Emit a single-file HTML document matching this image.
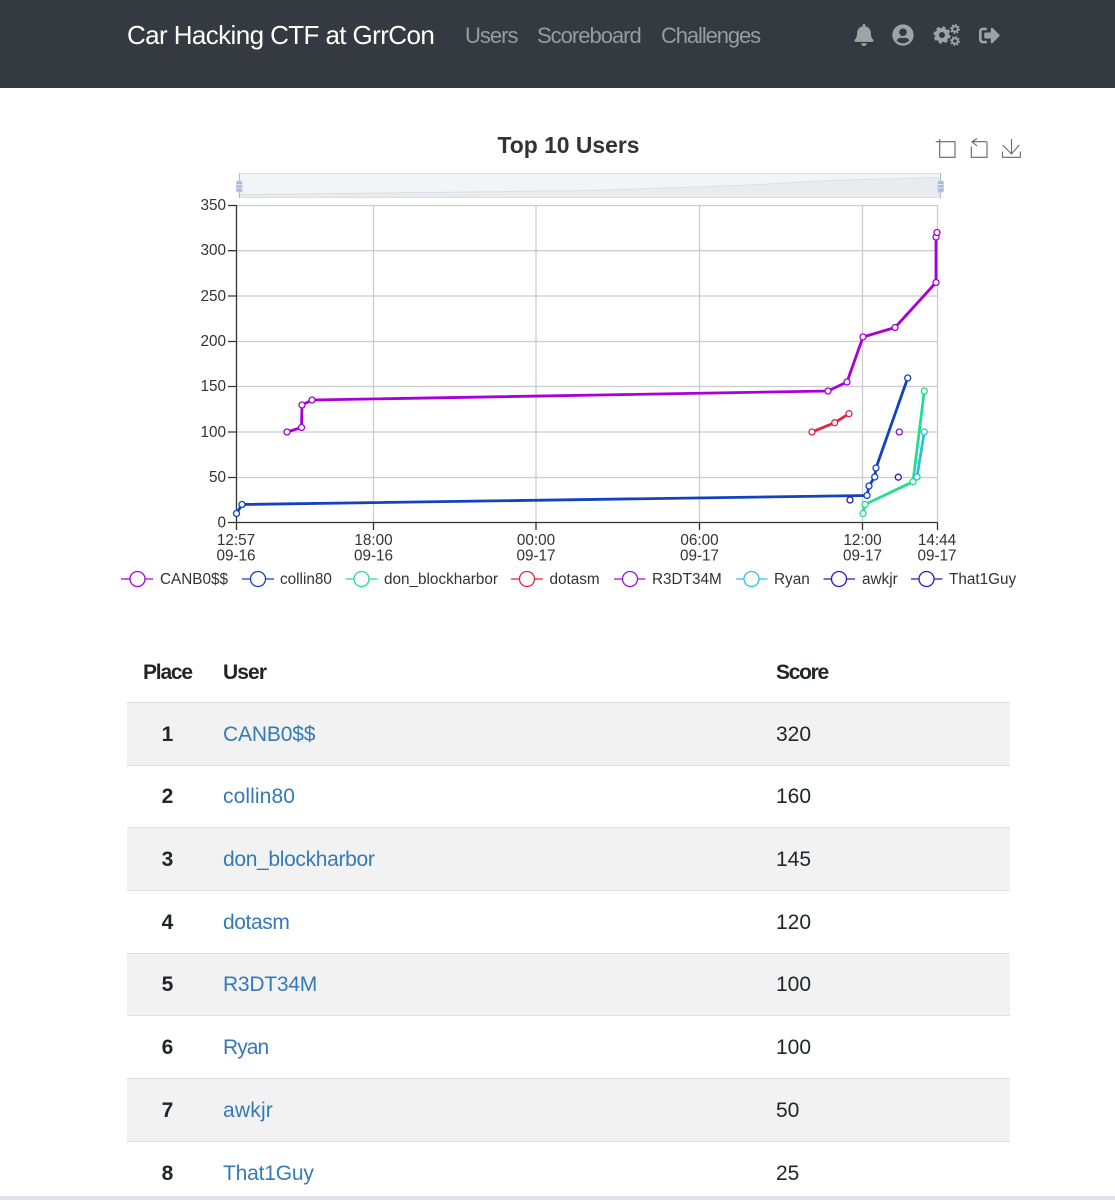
<!DOCTYPE html>
<html lang="en">
<head>
<meta charset="utf-8">
<title>Car Hacking CTF at GrrCon</title>
<style>
*{box-sizing:border-box}
html,body{margin:0;padding:0;width:1115px;height:1200px;overflow:hidden;background:#fff}
body{position:relative;font-family:"Liberation Sans",sans-serif;color:#212529}
a{text-decoration:none}
nav{position:absolute;left:0;top:0;width:1115px;height:88px;background:#343a40}
nav a{position:absolute;white-space:nowrap;line-height:30px;top:21px;font-size:22px;color:#989b9f}
nav a.brand{left:127px;top:20px;font-size:26px;color:#fff;letter-spacing:-.6px}
nav svg{position:absolute;left:0;top:0}
#chart{position:absolute;left:0;top:88px}
table{position:absolute;left:127px;top:640px;width:883px;border-collapse:separate;border-spacing:0;table-layout:fixed;font-size:21px}
th,td{padding:0;text-align:left;vertical-align:middle;border-top:1px solid #dfe0e6}
th{border-top:0;height:62px;font-weight:bold;padding-top:3px}
td{padding-top:1px}
th.p{padding-left:16px;letter-spacing:-1.2px}
td.p{font-weight:bold;text-align:center}
tbody tr:nth-child(odd) td{background:#f2f2f3}
td a{color:#337ab7}
#band{position:absolute;left:0;top:1196px;width:1115px;height:4px;background:#e2e3ea}
</style>
</head>
<body>
<nav>
<a class="brand">Car Hacking CTF at GrrCon</a>
<a style="left:465px;letter-spacing:-1px">Users</a>
<a style="left:537px;letter-spacing:-1px">Scoreboard</a>
<a style="left:661px;letter-spacing:-1.1px">Challenges</a>
<svg width="1115" height="88" fill="#a0a3a6">
<svg x="854" y="24" width="20" height="22" viewBox="0 0 448 512"><path d="M224 512c35.32 0 63.97-28.65 63.97-64H160.03c0 35.35 28.65 64 63.97 64zm215.39-149.71c-19.32-20.76-55.47-51.99-55.47-154.29 0-77.7-54.48-139.9-127.94-155.16V32c0-17.67-14.32-32-31.98-32s-31.98 14.33-31.98 32v20.84C118.56 68.1 64.08 130.3 64.08 208c0 102.3-36.15 133.53-55.47 154.29-6 6.45-8.66 14.16-8.61 21.71.11 16.4 12.98 32 32.1 32h383.8c19.12 0 32-15.6 32.1-32 .05-7.55-2.61-15.27-8.61-21.71z"/></svg>
<svg x="892" y="24" width="22" height="22" viewBox="0 0 496 512"><path d="M248 8C111 8 0 119 0 256s111 248 248 248 248-111 248-248S385 8 248 8zm0 96c48.6 0 88 39.4 88 88s-39.4 88-88 88-88-39.4-88-88 39.4-88 88-88zm0 344c-58.7 0-111.3-26.6-146.5-68.2 18.8-35.4 55.6-59.8 98.5-59.8 2.4 0 4.8.4 7.1 1.1 13 4.2 26.6 6.9 40.9 6.9 14.3 0 28-2.7 40.9-6.9 2.3-.7 4.7-1.1 7.1-1.1 42.9 0 79.7 24.4 98.5 59.8C359.3 421.4 306.7 448 248 448z"/></svg>
<g fill="none" stroke="#a0a3a6">
<circle cx="942" cy="35" r="5" stroke-width="4"/>
<circle cx="942" cy="35" r="7.3" stroke-width="2.6" stroke-dasharray="3.2 2.53"/>
<circle cx="955" cy="29" r="2.8" stroke-width="2"/>
<circle cx="955" cy="29" r="4.2" stroke-width="1.6" stroke-dasharray="1.6 1.7"/>
<circle cx="955" cy="41" r="2.8" stroke-width="2"/>
<circle cx="955" cy="41" r="4.2" stroke-width="1.6" stroke-dasharray="1.6 1.7"/>
</g>
<svg x="979" y="25" width="21" height="21" viewBox="0 0 512 512"><path d="M497 273L329 441c-15 15-41 4.5-41-17v-96H152c-13.3 0-24-10.7-24-24v-96c0-13.3 10.7-24 24-24h136V88c0-21.4 25.9-32 41-17l168 168c9.3 9.4 9.3 24.6 0 34zM192 436v-40c0-6.6-5.4-12-12-12H96c-17.7 0-32-14.3-32-32V160c0-17.7 14.3-32 32-32h84c6.6 0 12-5.4 12-12V76c0-6.6-5.4-12-12-12H96c-53 0-96 43-96 96v192c0 53 43 96 96 96h84c6.6 0 12-5.4 12-12z"/></svg>
</svg>
</nav>

<svg id="chart" width="1115" height="530" viewBox="0 88 1115 530" font-family="'Liberation Sans',sans-serif">
<text x="568.500" y="153" font-size="22.900" font-weight="bold" fill="#333" text-anchor="middle">Top 10 Users</text>

<!-- toolbox -->
<g fill="none" stroke="#666" stroke-width="1.100">
<path d="M935.700 141.700H955V157.300H939.700V139"/>
<path d="M986.700 141.700H972.500M977 138.500L972 141.700L977 146M971.300 146.500V157.300H987V141.700"/>
<path d="M1011.500 139V154M1002.700 145L1011.500 154L1019.300 145M1002.500 151.500V157.300H1020.300V151.500"/>
</g>

<!-- data zoom -->
<rect x="239.500" y="173.500" width="701" height="24" fill="#f3f4f8" stroke="#dcdde2"/>
<path d="M240 194.500L400 192.800L590 190.500L740 185.500L830 180.500L940 177.500V197H240Z" fill="#e9ebf0"/>
<path d="M240 194.500L400 192.800L590 190.500L740 185.500L830 180.500L940 177.500" fill="none" stroke="#dcdfe5"/>
<path d="M239.500 173V198M940.500 173V198" stroke="#a9b7d0" stroke-width="1"/>
<g fill="#a9b9d8" stroke="#c6d0e4">
<rect x="236.500" y="181" width="5.500" height="11" rx="1"/>
<rect x="938" y="181" width="5.500" height="11" rx="1"/>
</g>
<path d="M237 184.500H241.500M237 188H241.500M938.500 184.500H943M938.500 188H943" stroke="#e8ecf4"/>

<!-- grid -->
<g stroke="#ccc" stroke-width="1.300" fill="none">
<path d="M236.500 205.500H937.500M236.500 250.700H937.500M236.500 296H937.500M236.500 341.500H937.500M236.500 386.500H937.500M236.500 432H937.500M236.500 477.500H937.500"/>
<path d="M373.500 205V522M536 205V522M699.500 205V522M862.500 205V522M937.500 205V522"/>
</g>
<!-- axes -->
<g stroke="#333" stroke-width="1.300" fill="none">
<path d="M236.500 205V530M228 522.500H937.500"/>
<path d="M228 205.500H236.500M228 250.700H236.500M228 296H236.500M228 341.500H236.500M228 386.500H236.500M228 432H236.500M228 477.500H236.500"/>
<path d="M373.500 522.500V530M536 522.500V530M699.500 522.500V530M862.500 522.500V530M937.500 522.500V530"/>
</g>
<g font-size="15.300" fill="#333" text-anchor="end">
<text x="226" y="210">350</text>
<text x="226" y="255">300</text>
<text x="226" y="301">250</text>
<text x="226" y="346">200</text>
<text x="226" y="391">150</text>
<text x="226" y="437">100</text>
<text x="226" y="482">50</text>
<text x="226" y="527.500">0</text>
</g>
<g font-size="15.300" fill="#333" text-anchor="middle">
<text x="236" y="545">12:57</text><text x="236" y="560.500">09-16</text>
<text x="373.500" y="545">18:00</text><text x="373.500" y="560.500">09-16</text>
<text x="536" y="545">00:00</text><text x="536" y="560.500">09-17</text>
<text x="699.500" y="545">06:00</text><text x="699.500" y="560.500">09-17</text>
<text x="862.500" y="545">12:00</text><text x="862.500" y="560.500">09-17</text>
<text x="937" y="545">14:44</text><text x="937" y="560.500">09-17</text>
</g>

<!-- series -->
<g fill="none" stroke-width="2.800" stroke-linejoin="round">
<polyline stroke="#a800d8" points="287,432 301.500,427.500 302,405 312,400 828,391 847,382 863,337 895,327.500 936,282.500 936,237 937,232.500"/>
<polyline stroke="#1242c0" points="236.500,513.500 242,504.500 867,495.500 869,486 874.700,477 876,468 907.700,378"/>
<polyline stroke="#20e08c" points="863,513.500 865,504.500 913,481.700 924.300,391"/>
<polyline stroke="#e8223c" points="812,432 834.700,422.700 849,413.700"/>
<polyline stroke="#30bde0" points="917,477 924.300,432"/>
</g>
<g fill="#fff" stroke-width="1.300">
<g stroke="#a800d8">
<circle cx="287" cy="432" r="3"/><circle cx="301.500" cy="427.500" r="3"/><circle cx="302" cy="405" r="3"/><circle cx="312" cy="400" r="3"/><circle cx="828" cy="391" r="3"/><circle cx="847" cy="382" r="3"/><circle cx="863" cy="337" r="3"/><circle cx="895" cy="327.500" r="3"/><circle cx="936" cy="282.500" r="3"/><circle cx="936" cy="237" r="3"/><circle cx="937" cy="232.500" r="3"/>
</g>
<g stroke="#1242c0">
<circle cx="236.500" cy="513.500" r="3"/><circle cx="242" cy="504.500" r="3"/><circle cx="867" cy="495.500" r="3"/><circle cx="869" cy="486" r="3"/><circle cx="874.700" cy="477" r="3"/><circle cx="876" cy="468" r="3"/><circle cx="907.700" cy="378" r="3"/>
</g>
<g stroke="#20e08c">
<circle cx="863" cy="513.500" r="3"/><circle cx="865" cy="504.500" r="3"/><circle cx="913" cy="481.700" r="3"/><circle cx="924.300" cy="391" r="3"/>
</g>
<g stroke="#e8223c">
<circle cx="812" cy="432" r="3"/><circle cx="834.700" cy="422.700" r="3"/><circle cx="849" cy="413.700" r="3"/>
</g>
<circle cx="899.300" cy="432" r="3" stroke="#8a10c8"/>
<g stroke="#30bde0"><circle cx="917" cy="477" r="3"/><circle cx="924.300" cy="432" r="3"/></g>
<circle cx="898.300" cy="477.200" r="3" stroke="#3414b8"/>
<circle cx="850" cy="500" r="3" stroke="#3414b8"/>
</g>

<!-- legend -->
<g fill="#fff" stroke-width="1.300">
<g stroke="#a800d8"><path d="M121 579H153"/><circle cx="137.500" cy="579" r="7.500"/></g>
<g stroke="#1242c0"><path d="M242 579H274"/><circle cx="258" cy="579" r="7.500"/></g>
<g stroke="#20e08c"><path d="M345.500 579H377.500"/><circle cx="361.500" cy="579" r="7.500"/></g>
<g stroke="#e8223c"><path d="M511 579H543"/><circle cx="527" cy="579" r="7.500"/></g>
<g stroke="#9a10d8"><path d="M614 579H645.500"/><circle cx="630" cy="579" r="7.500"/></g>
<g stroke="#30c0e0"><path d="M736 579H767.500"/><circle cx="751.500" cy="579" r="7.500"/></g>
<g stroke="#3414c0"><path d="M823.500 579H855"/><circle cx="839" cy="579" r="7.500"/></g>
<g stroke="#3414c0"><path d="M911 579H942.500"/><circle cx="926.500" cy="579" r="7.500"/></g>
</g>
<g font-size="15.300" fill="#333">
<text x="160" y="584">CANB0$$</text>
<text x="280" y="584">collin80</text>
<text x="384" y="584">don_blockharbor</text>
<text x="549.500" y="584">dotasm</text>
<text x="652" y="584">R3DT34M</text>
<text x="774" y="584">Ryan</text>
<text x="862" y="584">awkjr</text>
<text x="949" y="584">That1Guy</text>
</g>
</svg>

<table>
<colgroup><col style="width:81px"><col style="width:553px"><col></colgroup>
<thead><tr><th class="p">Place</th><th style="padding-left:15px;letter-spacing:-.9px">User</th><th style="padding-left:15px;letter-spacing:-1.3px">Score</th></tr></thead>
<tbody>
<tr style="height:63px"><td class="p">1</td><td style="padding-left:15px"><a style="letter-spacing:-.15px">CANB0$$</a></td><td style="padding-left:15px">320</td></tr>
<tr style="height:62px"><td class="p">2</td><td style="padding-left:15px"><a style="letter-spacing:.1px">collin80</a></td><td style="padding-left:15px">160</td></tr>
<tr style="height:63px"><td class="p">3</td><td style="padding-left:15px"><a style="letter-spacing:-.33px">don_blockharbor</a></td><td style="padding-left:15px">145</td></tr>
<tr style="height:63px"><td class="p">4</td><td style="padding-left:15px"><a style="letter-spacing:-.4px">dotasm</a></td><td style="padding-left:15px">120</td></tr>
<tr style="height:62px"><td class="p">5</td><td style="padding-left:15px"><a style="letter-spacing:-.25px">R3DT34M</a></td><td style="padding-left:15px">100</td></tr>
<tr style="height:63px"><td class="p">6</td><td style="padding-left:15px"><a style="letter-spacing:-.95px">Ryan</a></td><td style="padding-left:15px">100</td></tr>
<tr style="height:63px"><td class="p">7</td><td style="padding-left:15px"><a style="letter-spacing:.2px">awkjr</a></td><td style="padding-left:15px">50</td></tr>
<tr style="height:63px"><td class="p">8</td><td style="padding-left:15px"><a style="letter-spacing:-.2px">That1Guy</a></td><td style="padding-left:15px">25</td></tr>
</tbody>
</table>
<div id="band"></div>
</body>
</html>
